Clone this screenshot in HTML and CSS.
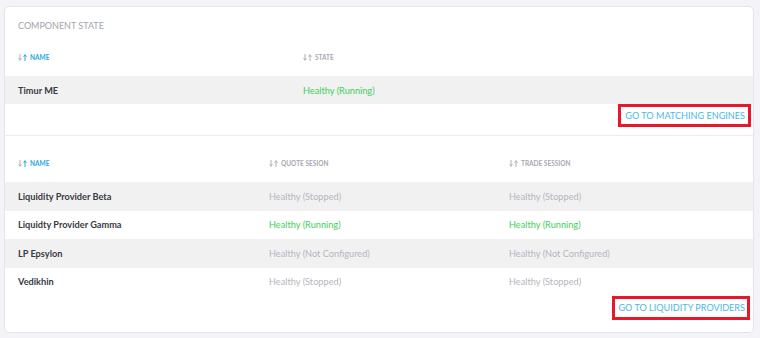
FILE: index.html
```html
<!DOCTYPE html>
<html lang="en">
<head>
  <meta charset="UTF-8" />
  <title>Component State</title>
  <link rel="stylesheet" href="styles.css">
</head>
<body>
  <div class="card">
    <div class="card-title">COMPONENT STATE</div>

    <div class="table table-me">
      <div class="thead">
        <div class="th active">
          <svg class="sort" viewBox="0 0 9 7" width="9" height="7"><path d="M2 0v5.5M0.6 4.2L2 6.4L3.4 4.2" class="down"/><path d="M7 7V1.5M5.6 2.8L7 0.6L8.4 2.8" class="up"/></svg>
          NAME
        </div>
        <div class="th">
          <svg class="sort" viewBox="0 0 9 7" width="9" height="7"><path d="M2 0v5.5M0.6 4.2L2 6.4L3.4 4.2" class="down"/><path d="M7 7V1.5M5.6 2.8L7 0.6L8.4 2.8" class="up"/></svg>
          STATE
        </div>
      </div>
      <div class="tr">
        <div class="td name">Timur ME</div>
        <div class="td ok">Healthy (Running)</div>
      </div>
    </div>
    <div class="link-row">
      <a class="go-link" href="#">GO TO MATCHING ENGINES</a>
    </div>

    <div class="table table-lp">
      <div class="thead">
        <div class="th active">
          <svg class="sort" viewBox="0 0 9 7" width="9" height="7"><path d="M2 0v5.5M0.6 4.2L2 6.4L3.4 4.2" class="down"/><path d="M7 7V1.5M5.6 2.8L7 0.6L8.4 2.8" class="up"/></svg>
          NAME
        </div>
        <div class="th">
          <svg class="sort" viewBox="0 0 9 7" width="9" height="7"><path d="M2 0v5.5M0.6 4.2L2 6.4L3.4 4.2" class="down"/><path d="M7 7V1.5M5.6 2.8L7 0.6L8.4 2.8" class="up"/></svg>
          QUOTE SESION
        </div>
        <div class="th">
          <svg class="sort" viewBox="0 0 9 7" width="9" height="7"><path d="M2 0v5.5M0.6 4.2L2 6.4L3.4 4.2" class="down"/><path d="M7 7V1.5M5.6 2.8L7 0.6L8.4 2.8" class="up"/></svg>
          TRADE SESSION
        </div>
      </div>
      <div class="tr">
        <div class="td name">Liquidity Provider Beta</div>
        <div class="td off">Healthy (Stopped)</div>
        <div class="td off">Healthy (Stopped)</div>
      </div>
      <div class="tr">
        <div class="td name">Liquidty Provider Gamma</div>
        <div class="td ok">Healthy (Running)</div>
        <div class="td ok">Healthy (Running)</div>
      </div>
      <div class="tr">
        <div class="td name">LP Epsylon</div>
        <div class="td off">Healthy (Not Configured)</div>
        <div class="td off">Healthy (Not Configured)</div>
      </div>
      <div class="tr">
        <div class="td name">Vedikhin</div>
        <div class="td off">Healthy (Stopped)</div>
        <div class="td off">Healthy (Stopped)</div>
      </div>
    </div>
    <div class="link-row link-row-last">
      <a class="go-link" href="#">GO TO LIQUIDITY PROVIDERS</a>
    </div>
  </div>
</body>
</html>
```

FILE: styles.css
```css
*, *::before, *::after {
  box-sizing: border-box;
  margin: 0;
  padding: 0;
}
html, body {
  background: #f4f4f8;
  font-family: 'Lato', 'Liberation Sans', sans-serif;
  color: #3a3a44;
}
body {
  padding: 6px 6px 5px 4px;
}
.card {
  width: 750px;
  height: 327px;
  background: #ffffff;
  border: 1px solid #e4e4ea;
  border-radius: 5px;
  overflow: hidden;
}
.card-title {
  height: 35px;
  padding: 13px 13px 0;
  font-size: 9px;
  line-height: 12px;
  color: #a3a3ad;
}
.thead,
.tr {
  display: grid;
  padding: 0 13px;
}
.table-me .thead,
.table-me .tr {
  grid-template-columns: 285px 1fr;
}
.table-lp .thead,
.table-lp .tr {
  grid-template-columns: 251px 240px 1fr;
}
.thead {
  height: 34px;
  padding-top: 10px;
}
.table-lp .thead {
  height: 46px;
  padding-top: 22px;
}
.th {
  display: flex;
  align-items: center;
  gap: 3px;
  height: 10px;
  font-size: 6.5px;
  font-weight: 700;
  color: #a8a8b2;
}
.th.active {
  color: #2ba6df;
}
.sort path {
  fill: none;
  stroke: #b0b0b8;
  stroke-width: 1;
}
.th.active .sort .up {
  stroke: #2ba6df;
}
.tr {
  height: 28.5px;
  align-items: center;
  font-size: 9.2px;
}
.table-me .tr {
  height: 28px;
}
.tr:nth-child(even) {
  background: #f1f1f2;
}
.td.name {
  font-weight: 700;
  color: #3a3a44;
}
.td.ok {
  color: #3fcf5a;
}
.td.off {
  color: #b6b6c0;
}
.link-row {
  display: flex;
  justify-content: flex-end;
  height: 32px;
  padding-right: 2px;
  border-bottom: 1px solid #ececf0;
}
.link-row-last {
  height: auto;
  padding-right: 3px;
  border-bottom: none;
}
.go-link {
  display: block;
  height: 23px;
  padding: 3px 3px 3px 4px;
  border: 3px solid #e8182a;
  font-size: 9.1px;
  line-height: 11px;
  color: #4cb8e8;
  text-decoration: none;
}
.link-row-last .go-link {
  height: 24px;
  line-height: 12px;
  padding-left: 3px;
  padding-right: 2px;
}
```
